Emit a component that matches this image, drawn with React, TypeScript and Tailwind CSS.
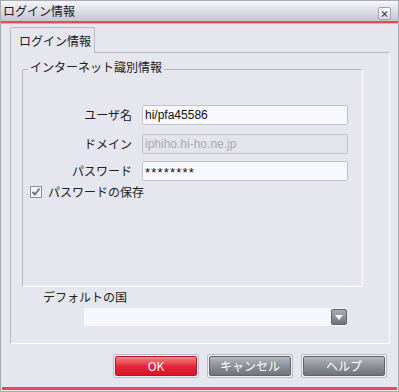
import React from "react";

const font = { fontFamily: '"Noto Sans CJK JP", "Liberation Sans", sans-serif' };

const Field: React.FC<{
  label: string;
  value: string;
  disabled?: boolean;
  secret?: boolean;
  className?: string;
}> = ({ label, value, disabled, secret, className }) => (
  <div className={`flex items-center ${className ?? ""}`}>
    <div className="w-[110px] pr-[1px] text-right text-[12px] leading-none text-[#202020]">
      {label}
    </div>
    <div
      className={`ml-[9px] w-[206px] h-[20px] rounded-[2px] border border-[#c0c2cc] flex items-center pl-[2px] ${
        disabled ? "bg-[#e4e4ec] text-[#a8a8b4]" : "bg-[#f8f8ff] text-[#101010]"
      } ${secret ? "text-[13px] tracking-[1.2px] pt-[3px]" : "text-[12px]"}`}
      style={{ fontFamily: '"Liberation Sans", sans-serif' }}
    >
      {value}
    </div>
  </div>
);

const Button: React.FC<{ label: string; primary?: boolean }> = ({ label, primary }) => (
  <div className="w-[86px] h-[24px] rounded-[2px] border border-[#b8bac4] p-[1px] bg-[#f2f2f6]">
    <div
      className={`h-full rounded-[2px] border flex items-center justify-center text-[12px] text-white ${
        primary
          ? "border-[#b01828] bg-gradient-to-b from-[#f48088] via-[#e42438] to-[#d81428]"
          : "border-[#60646c] bg-gradient-to-b from-[#b4b8c0] via-[#8c9098] to-[#70747c]"
      }`}
    >
      {label}
    </div>
  </div>
);

export default function App() {
  return (
    <div
      className="w-[399px] h-[392px] bg-[#e6e6ee] border border-[#a8aab6] flex flex-col overflow-hidden"
      style={font}
    >
      {/* title bar */}
      <div className="h-[20px] flex items-center justify-between pl-[2px] pr-[7px] bg-gradient-to-b from-[#f6f6fa] via-[#dcdde6] to-[#c4c6d2]">
        <span className="text-[12px] text-[#202020] leading-none">ログイン情報</span>
        <div className="w-[13px] h-[13px] mt-[5px] rounded-[2px] border border-[#a0a2ae] bg-gradient-to-b from-[#ffffff] to-[#d8dae2] flex items-center justify-center text-[9px] font-bold leading-none text-[#303038]">
          ×
        </div>
      </div>
      <div className="h-[3px] bg-[#e84858] border-b border-[#f0a0a8]" />

      {/* content */}
      <div className="pl-[9px] pt-[3px] flex flex-col">
        <div className="w-[85px] h-[26px] -mb-[1px] relative z-10 rounded-t-[2px] border border-b-0 border-[#b8bac6] bg-[#e6e6ee] flex items-center pl-[8px] text-[12px] text-[#202020]">
          ログイン情報
        </div>
        <div className="w-[380px] h-[292px] border border-[#b8bac6] border-r-[#ffffff] border-b-[#ffffff] px-[11px] flex flex-col">
          {/* group box */}
          <div className="mt-[16px] w-[341px] h-[218px] border border-[#b4b6c2] border-r-white border-b-white rounded-[2px] relative flex flex-col pt-[35px]">
            <span className="absolute left-[5px] -top-[9px] px-[2px] bg-[#e6e6ee] text-[12px] text-[#202020] leading-none">
              インターネット識別情報
            </span>
            <Field label="ユーザ名" value="hi/pfa45586" />
            <Field label="ドメイン" value="iphiho.hi-ho.ne.jp" disabled className="mt-[9px]" />
            <Field label="パスワード" value="********" secret className="mt-[7px]" />
            <label className="flex items-center mt-[2px] ml-[7px] text-[12px] text-[#202020]">
              <span className="w-[12px] h-[12px] border border-[#8c8e9a] bg-[#f4f4f8] flex items-center justify-center">
                <svg width="10" height="10" viewBox="0 0 10 10">
                  <path d="M1.5 5 L4 7.5 L8.5 1.5" stroke="#6a6c78" strokeWidth="1.8" fill="none" />
                </svg>
              </span>
              <span className="ml-[6px]">パスワードの保存</span>
            </label>
          </div>

          <div className="mt-[4px] ml-[21px] text-[12px] text-[#202020] leading-none">デフォルトの国</div>
          <div className="mt-[5px] ml-[62px] w-[263px] h-[18px] bg-[#f6f6fe] flex justify-end">
            <div className="w-[16px] h-[16px] mt-[1px] rounded-[2px] border border-[#60646c] bg-gradient-to-b from-[#a8acb4] to-[#70747c] flex items-center justify-center">
              <svg width="8" height="5" viewBox="0 0 8 5">
                <path d="M0 0 H8 L4 5 Z" fill="#ffffff" />
              </svg>
            </div>
          </div>
        </div>

        <div className="mt-[10px] flex gap-[8px] pl-[103px]">
          <Button label="OK" primary />
          <Button label="キャンセル" />
          <Button label="ヘルプ" />
        </div>
      </div>
      <div className="mt-auto mb-[1px] mx-[1px] h-[3px] bg-[#e84858]" />
    </div>
  );
}
